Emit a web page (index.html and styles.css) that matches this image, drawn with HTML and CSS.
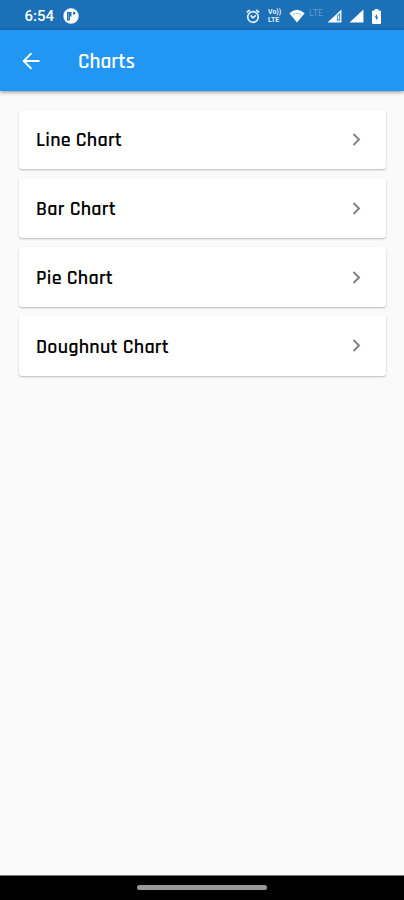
FILE: index.html
```
<!DOCTYPE html>
<html lang="en">
<head>
<meta charset="utf-8">
<title>Charts</title>
<link rel="stylesheet" href="styles.css">
</head>
<body>
<header class="status">
  <span class="time">6:54</span>
  <svg class="app" width="16" height="16" viewBox="0 0 16 16"><circle cx="8" cy="8" r="7.7" fill="#fff"/><path d="M4 4h4.500v4.500H7V12.500H4zM10 4h2.200v2.600H10z" fill="#1b70b8"/><path d="M5.600 5.500v6" stroke="#8fbbe0" stroke-width=".8"/></svg>
  <svg class="alarm" width="14" height="15" viewBox="0 0 14 15" fill="none" stroke="#e4f1fb" stroke-width="1.700"><circle cx="7" cy="8" r="5.300"/><path d="M.8 3.400 3.800 1M13.200 3.400 10.200 1M4.600 6.400 7 8.800 9.800 6.400"/></svg>
  <span class="volte"><span>Vo))</span><span>LTE</span></span>
  <svg class="wifi" width="16" height="14" viewBox="0 0 16 14"><path d="M.3 4.300Q8-2.700 15.700 4.300L8 13.500z" fill="#fff"/><path d="M3.500 6.200Q8 2.800 12.500 6.200" fill="none" stroke="#8abbe2" stroke-width=".8"/></svg>
  <span class="lte">LTE</span>
  <svg class="sig1" width="15" height="14" viewBox="0 0 14 13"><path d="M.5 12.500 13.500.5v12z" fill="#fff"/><path d="M9.200 6 12.300 3.200v8.200H9.200z" fill="#1b70b8" opacity=".75"/><path d="M10.700 6v3.300m0 1v1.200" stroke="#fff"/></svg>
  <svg class="sig2" width="15" height="14" viewBox="0 0 14 13"><path d="M.5 12.500 13.500.5v12z" fill="#fff"/></svg>
  <svg class="battery" width="9" height="15" viewBox="0 0 9 15"><path d="M2.800 0h3.400v1.500H8a1 1 0 0 1 1 1V14a1 1 0 0 1-1 1H1a1 1 0 0 1-1-1V2.500a1 1 0 0 1 1-1h1.800z" fill="#fff"/><path d="M4.900 4.800 2.700 8.500h1.500V11.500L6.300 7.700H4.900z" fill="#1b70b8"/></svg>
</header>
<nav class="appbar">
  <svg width="18" height="18" viewBox="0 0 18 18" fill="none" stroke="#fff" stroke-width="1.9"><path d="M17.500 9H1.500M9.500 1.200 1.700 9l7.800 7.800"/></svg>
  <h1>Charts</h1>
</nav>
<main class="list">
  <a class="card"><span class="label">Line Chart</span><svg class="chevron" width="9" height="13" viewBox="0 0 9 13"><path d="M1.500 1 7 6.500 1.500 12"/></svg></a>
  <a class="card"><span class="label">Bar Chart</span><svg class="chevron" width="9" height="13" viewBox="0 0 9 13"><path d="M1.500 1 7 6.500 1.500 12"/></svg></a>
  <a class="card"><span class="label">Pie Chart</span><svg class="chevron" width="9" height="13" viewBox="0 0 9 13"><path d="M1.500 1 7 6.500 1.500 12"/></svg></a>
  <a class="card"><span class="label">Doughnut Chart</span><svg class="chevron" width="9" height="13" viewBox="0 0 9 13"><path d="M1.500 1 7 6.500 1.500 12"/></svg></a>
</main>
<footer class="gesture"><span class="handle"></span></footer>
</body>
</html>
```
FILE: styles.css
```
* { box-sizing: border-box; }
body {
  margin: 0;
  height: 900px;
  display: flex;
  flex-direction: column;
  overflow: hidden;
  background: #fafafa;
  font-family: Rajdhani, Roboto, sans-serif;
}
svg { flex: none; display: block; }
.status {
  height: 30px;
  flex: none;
  display: flex;
  align-items: center;
  padding: 2px 0 0 24.500px;
  background: #1b70b8;
  color: #fff;
}
.time {
  width: 38.500px;
  font: 500 15px/18px Roboto, sans-serif;
}
.alarm { margin-left: 167px; }
.volte {
  width: 17px;
  margin-left: 8px;
  display: flex;
  flex-direction: column;
  font: 700 7px/8px Roboto, sans-serif;
  color: #e4f1fb;
}
.wifi { margin-left: 4px; }
.lte {
  width: 18px;
  margin: -7px 0 0 4px;
  font: 400 9px/10px Roboto, sans-serif;
  color: #5b9bd0;
}
.sig2 { margin-left: 7px; }
.battery { margin-left: 8px; }
.appbar {
  height: 61px;
  flex: none;
  display: flex;
  align-items: center;
  padding-left: 22px;
  background: #2196f3;
  box-shadow: 0 1px 4px rgba(0, 0, 0, 0.45);
}
.appbar h1 {
  margin: 0 0 0 38px;
  padding-top: 2px;
  color: #fff;
  font-size: 21.200px;
  font-weight: 600;
  line-height: 24px;
}
.list {
  flex: 1;
  display: flex;
  flex-direction: column;
  gap: 9px;
  padding: 18.600px 18px 0 19px;
}
.card {
  height: 59.800px;
  display: flex;
  align-items: center;
  justify-content: space-between;
  padding: 0 25px 0 17px;
  border-radius: 3px;
  background: #fff;
  box-shadow: 0 1px 2px rgba(0, 0, 0, 0.25);
}
.label {
  padding-top: 2px;
  color: #000;
  font-size: 20px;
  font-weight: 600;
  line-height: 24px;
  letter-spacing: 0.24px;
  white-space: nowrap;
}
.chevron path { fill: none; stroke: #808080; stroke-width: 1.9; }
.gesture {
  height: 25px;
  flex: none;
  display: flex;
  align-items: center;
  justify-content: center;
  background: #000;
  border-top: 1px solid #777;
}
.handle {
  width: 130px;
  height: 5px;
  margin-top: -2px;
  border-radius: 3px;
  background: #999;
}
```
